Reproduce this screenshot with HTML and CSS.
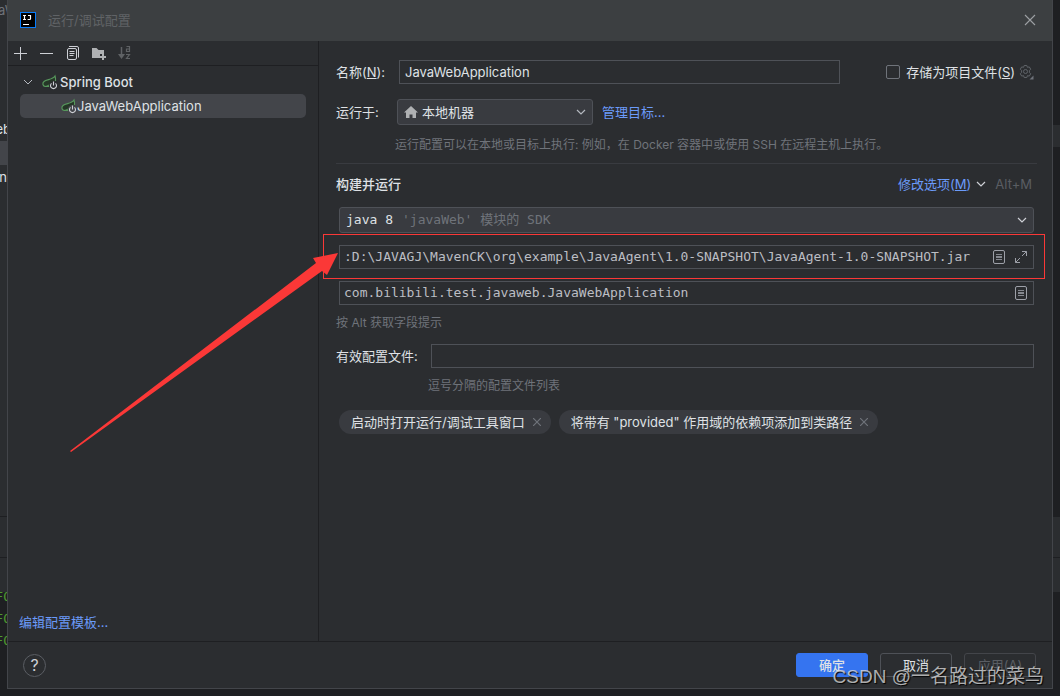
FILE: index.html
```html
<!DOCTYPE html>
<html lang="zh-CN">
<head>
<meta charset="utf-8">
<title>运行/调试配置</title>
<link rel="stylesheet" href="styles.css">
</head>
<body>
<div class="screen">
  <div class="behind behind-left" aria-hidden="true">
    <span class="scrap scrap-title">aW</span>
    <span class="scrap scrap-web">eb</span>
    <span class="scrap scrap-row"></span>
    <span class="scrap scrap-n">n</span>
    <span class="scrap scrap-log">FO<br>FO<br>FO</span>
  </div>

  <div class="dialog" role="dialog" aria-labelledby="title">
    <header class="titlebar">
      <svg class="logo" width="16" height="16" viewBox="0 0 16 16" aria-hidden="true">
        <rect x=".5" y=".5" width="15" height="15" fill="#000" stroke="#087cfa"/>
        <path d="M3 3.500h3M4.500 3.500v4M3 7.500h3M8 3.500h2.500v3.200q0 .8-.8.8H7.600M3 12.500h6" fill="none" stroke="#fff" stroke-width="1.200"/>
      </svg>
      <h1 class="title" id="title">运行/调试配置</h1>
      <button class="icon-button" aria-label="关闭">
        <svg width="12" height="12" viewBox="0 0 12 12"><path d="M1 1l10 10M11 1L1 11" stroke="#9da0a3" stroke-width="1.100"/></svg>
      </button>
    </header>

    <div class="content">
      <aside class="sidebar">
        <div class="toolbar">
          <button class="icon-button" aria-label="添加"><svg width="16" height="16" viewBox="0 0 16 16"><path d="M8.500 2v13M2 8.500h13" stroke="#ced0d6" stroke-width="1"/></svg></button>
          <button class="icon-button" aria-label="移除"><svg width="16" height="16" viewBox="0 0 16 16"><path d="M2 8.500h13" stroke="#ced0d6" stroke-width="1"/></svg></button>
          <button class="icon-button" aria-label="复制"><svg width="16" height="16" viewBox="0 0 16 16" fill="none" stroke="#ced0d6"><rect x="3.500" y="3.500" width="9" height="11" rx="1.500"/><path d="M5 1.500h8a1.500 1.500 0 0 1 1.500 1.500v9.500M5.500 6.500h5M5.500 8.500h5M5.500 10.500h4"/></svg></button>
          <button class="icon-button" aria-label="新建文件夹"><svg width="16" height="16" viewBox="0 0 16 16" fill="#afb1b3"><path d="M2 3h4.500l2 2H14v4h-4v4H2z"/><path d="M12 9h2v2h2v2h-2v2h-2v-2h-2v-2h2z"/></svg></button>
          <button class="icon-button" aria-label="排序" disabled><svg width="16" height="16" viewBox="0 0 16 16" fill="none" stroke="#5f6265"><path d="M5.500 2v10" stroke-width="1.500"/><path d="M2 9h7l-3.500 5z" fill="#5f6265" stroke="none"/><path d="M10.500 1.500h3v5h-3v-2.500h3M10 9.500h3.500l-3 4H14" stroke-width="1.200"/></svg></button>
        </div>
        <ul class="tree">
          <li class="node group">
            <svg width="16" height="16" viewBox="0 0 16 16"><path d="M4 6l4 4 4-4" fill="none" stroke="#b4b8bf"/></svg>
            <svg width="16" height="16" viewBox="0 0 16 16"><path d="M13.500 2c.5 3.500.3 6.500-1.500 8.500-1.500 2-4 2.500-6.500 2.500H3C.5 12.500.3 9 2 7.500 4.500 5 10.500 6 13.500 2z" fill="#253627"/><path d="M7.500 12.500H3C.5 12 .3 9 2 7.500 4.500 5 10.500 6 13 2q.8 2.500.5 5M2 12.500c3-.2 6-1.500 8-4" fill="none" stroke="#57965c" stroke-width="1.200"/><circle cx="11.500" cy="11.500" r="4.500" fill="#2b2d30"/><path d="M9.500 9.400a3 3 0 1 0 4 0M11.500 7.500v4" fill="none" stroke="#ced0d6" stroke-width="1.100"/></svg>
            <span>Spring Boot</span>
          </li>
          <li class="node leaf">
            <svg width="16" height="16" viewBox="0 0 16 16"><path d="M13.500 2c.5 3.500.3 6.500-1.500 8.500-1.500 2-4 2.500-6.500 2.500H3C.5 12.500.3 9 2 7.500 4.500 5 10.500 6 13.500 2z" fill="#253627"/><path d="M7.500 12.500H3C.5 12 .3 9 2 7.500 4.500 5 10.500 6 13 2q.8 2.500.5 5M2 12.500c3-.2 6-1.500 8-4" fill="none" stroke="#57965c" stroke-width="1.200"/><circle cx="11.500" cy="11.500" r="4.500" fill="#43454a"/><path d="M9.500 9.400a3 3 0 1 0 4 0M11.500 7.500v4" fill="none" stroke="#ced0d6" stroke-width="1.100"/></svg>
            <span>JavaWebApplication</span>
          </li>
        </ul>
        <a class="link templates" href="#">编辑配置模板...</a>
      </aside>

      <main class="form">
        <div class="row name-row">
          <label class="label" for="name">名称(<u>N</u>):</label>
          <input class="field name" id="name" type="text" value="JavaWebApplication">
          <div class="store">
            <input class="check" id="store" type="checkbox">
            <label for="store">存储为项目文件(<u>S</u>)</label>
            <svg width="16" height="16" viewBox="0 0 16 16" fill="none" stroke="#5f6368"><path d="M6.200 1.500h2.600l.6 1.800 1.900-.4 1.400 2.300-1.300 1.400v1.800l1.300 1.400-1.400 2.300-1.900-.4-.6 1.800H6.200l-.6-1.800-1.900.4-1.400-2.300 1.300-1.400V6.600L2.300 5.200l1.400-2.300 1.900.4z"/><circle cx="7.500" cy="7.500" r="2"/><path d="M15.500 11.500v4h-4z" fill="#6f737a" stroke="none"/></svg>
          </div>
        </div>

        <div class="row target-row">
          <label class="label" for="target">运行于:</label>
          <div class="select-box target">
            <select class="select" id="target"><option>本地机器</option></select>
            <svg class="home" width="16" height="16" viewBox="0 0 16 16" fill="#afb1b3"><path d="M8 2l7 6.500h-2V14H9.500v-3.500h-3V14H3V8.500H1z"/></svg>
            <svg class="chevron" width="16" height="16" viewBox="0 0 16 16"><path d="M4 6l4 4 4-4" fill="none" stroke="#b4b8bf" stroke-width="1.200"/></svg>
          </div>
          <a class="link" href="#">管理目标...</a>
        </div>
        <p class="hint target-hint">运行配置可以在本地或目标上执行: 例如，在 Docker 容器中或使用 SSH 在远程主机上执行。</p>

        <section class="build">
          <div class="row build-head">
            <h2 class="heading">构建并运行</h2>
            <a class="link" href="#">修改选项(<u>M</u>)</a>
            <svg width="16" height="16" viewBox="0 0 16 16"><path d="M4 6l4 4 4-4" fill="none" stroke="#ced0d6" stroke-width="1.200"/></svg>
            <span class="shortcut">Alt+M</span>
          </div>

          <div class="stack">
            <div class="select-box">
              <select class="select mono" aria-label="JDK"><option>java 8</option></select>
              <span class="sdk-note mono">'javaWeb' 模块的 SDK</span>
              <svg class="chevron" width="16" height="16" viewBox="0 0 16 16"><path d="M4 6l4 4 4-4" fill="none" stroke="#ced0d6" stroke-width="1.200"/></svg>
            </div>

            <div class="field vm">
              <input class="bare mono" type="text" aria-label="虚拟机选项" value=":D:\JAVAGJ\MavenCK\org\example\JavaAgent\1.0-SNAPSHOT\JavaAgent-1.0-SNAPSHOT.jar">
              <button class="icon-button" aria-label="插入宏"><svg width="16" height="16" viewBox="0 0 16 16" fill="none" stroke="#9da0a8"><rect x="2.500" y="1.500" width="11" height="13" rx="1.500"/><path d="M5 5.500h6M5 7.500h6M5 8.500h6M5 10.500h6" stroke-width=".8"/></svg></button>
              <button class="icon-button" aria-label="展开"><svg width="16" height="16" viewBox="0 0 16 16" fill="none" stroke="#9da0a8"><path d="M9 2.500h4.500V7M13.500 2.500L9 7M2.500 9v4.500H7M2.500 13.500L7 9"/></svg></button>
              <div class="mark" aria-hidden="true"></div>
              <svg class="arrow" width="270" height="202" viewBox="0 0 270 202" aria-hidden="true"><path d="M1 200L247 12l-3-5 25-5-11 22-5-4L2 201z" fill="#fb3837"/></svg>
            </div>

            <div class="field">
              <input class="bare mono" type="text" aria-label="主类" value="com.bilibili.test.javaweb.JavaWebApplication">
              <button class="icon-button" aria-label="浏览"><svg width="16" height="16" viewBox="0 0 16 16" fill="none" stroke="#9da0a8"><rect x="2.500" y="1.500" width="11" height="13" rx="1.500"/><path d="M5 5.500h6M5 7.500h6M5 8.500h6M5 10.500h6" stroke-width=".8"/></svg></button>
            </div>
          </div>
          <p class="hint alt-hint">按 Alt 获取字段提示</p>

          <div class="row profiles-row">
            <label class="label" for="profiles">有效配置文件:</label>
            <input class="field profiles" id="profiles" type="text">
          </div>
          <p class="hint profiles-hint">逗号分隔的配置文件列表</p>

          <div class="chips">
            <span class="chip">启动时打开运行/调试工具窗口
              <button class="icon-button" aria-label="移除"><svg width="8" height="8" viewBox="0 0 8 8"><path d="M0 0l8 8M8 0L0 8" stroke="#6f737a" stroke-width="1.200"/></svg></button>
            </span>
            <span class="chip">将带有 "provided" 作用域的依赖项添加到类路径
              <button class="icon-button" aria-label="移除"><svg width="8" height="8" viewBox="0 0 8 8"><path d="M0 0l8 8M8 0L0 8" stroke="#6f737a" stroke-width="1.200"/></svg></button>
            </span>
          </div>
        </section>
      </main>
    </div>

    <footer class="footer">
      <button class="help" aria-label="帮助">?</button>
      <button class="button primary">确定</button>
      <button class="button">取消</button>
      <button class="button" disabled>应用(<u>A</u>)</button>
    </footer>
  </div>

  <div class="behind behind-right" aria-hidden="true"></div>
  <div class="watermark">CSDN @一名路过的菜鸟</div>
</div>
</body>
</html>
```
FILE: styles.css
```css
* {
  box-sizing: border-box;
}

body {
  margin: 0;
  background: #1e1f22;
  color: #dfe1e5;
  font: 13px/20px Inter, "Noto Sans CJK SC", sans-serif;
}

h1, h2, p, ul {
  margin: 0;
  padding: 0;
}

button, input, select {
  margin: 0;
  padding: 0;
  border: 0;
  background: none;
  color: inherit;
  font: inherit;
}

svg {
  display: block;
  flex: none;
}

.screen {
  position: relative;
  display: grid;
  grid-template-columns: 7px 1fr 7px;
  min-height: 100vh;
  padding-bottom: 7px;
}

/* Editor window showing past the dialog's edges */
.behind {
  position: relative;
  overflow: hidden;
}

.behind-left {
  background: linear-gradient(#2b2d30 516px, #1e1f22 516px 517px, #2b2d30 517px 557px, #1e1f22 557px 558px, #2b2d30 558px 592px, #1e1f22 592px);
}

.behind-right {
  background: linear-gradient(#1e1f22 125px, #2b2d30 125px 147px, #1e1f22 147px 517px, #2b2d30 517px 557px, #1e1f22 557px 558px, #2b2d30 558px 592px, #1e1f22 592px);
}

.scrap {
  position: absolute;
  right: 0;
}

.scrap-title {
  top: 0;
  right: auto;
  left: -2px;
  color: #6f737a;
}

.scrap-web {
  top: 119px;
  right: -4px;
}

.scrap-row {
  top: 141px;
  width: 7px;
  height: 24px;
  background: #43454a;
}

.scrap-n {
  top: 167px;
}

.scrap-log {
  top: 586px;
  right: -4px;
  color: #4e9a2f;
  font: 13px/22px "DejaVu Sans Mono", monospace;
}

.dialog {
  display: flex;
  flex-direction: column;
  min-width: 0;
  border: 1px solid #43454a;
  border-top: 0;
  background: #2b2d30;
}

.titlebar {
  display: flex;
  align-items: center;
  height: 41px;
  padding: 0 16px 1px 12px;
  background: #3c3f41;
}

.title {
  flex: 1;
  margin-left: 12px;
  color: #606366;
  font-size: 13px;
  font-weight: 400;
}

.icon-button {
  display: grid;
  place-items: center;
}

.content {
  display: flex;
  flex: 1;
}

.sidebar {
  display: flex;
  flex-direction: column;
  width: 311px;
  border-right: 1px solid #1e1f22;
}

.toolbar {
  display: flex;
  gap: 10px;
  height: 25px;
  padding: 0 4px;
  border-bottom: 1px solid #1e1f22;
}

.tree {
  flex: 1;
  padding: 4px 12px;
  list-style: none;
}

.node {
  display: flex;
  align-items: center;
  height: 24px;
  border-radius: 5px;
}

.group {
  gap: 6px;
  font-weight: 500;
}

.group span {
  margin-left: -4px;
}

.leaf {
  padding-left: 41px;
  background: #43454a;
}

.link {
  color: #6b9bfa;
  text-decoration: none;
}

.templates {
  padding: 0 11px 9px;
}

.form {
  flex: 1;
  min-width: 0;
  padding: 19px 15px 19px 17px;
}

.row {
  display: flex;
  align-items: center;
  padding-right: 3px;
}

.label {
  flex: none;
  width: 61px;
}

.field {
  display: flex;
  align-items: center;
  height: 24px;
  border: 1px solid #4e5157;
}

.name {
  flex: 1;
  min-width: 0;
  margin: 0 46px 0 2px;
  padding: 0 5px;
}

.store {
  display: flex;
  align-items: center;
  gap: 6px;
}

.store svg {
  margin-left: -3px;
}

.check {
  width: 14px;
  height: 14px;
  border: 1px solid #6f737a;
  border-radius: 2px;
  appearance: none;
}

.target-row {
  margin-top: 15px;
}

.select-box {
  position: relative;
  display: flex;
  align-items: center;
  height: 26px;
}

.select {
  width: 100%;
  height: 26px;
  padding: 0 28px 0 6px;
  border: 1px solid #4e5157;
  border-radius: 3px;
  background: #393b40;
  appearance: none;
}

.target {
  width: 196px;
  margin-right: 9px;
}

.target .select {
  padding-left: 24px;
}

.home {
  position: absolute;
  left: 6px;
}

.chevron {
  position: absolute;
  right: 4px;
}

.hint {
  color: #6f737a;
  font-size: 12px;
  line-height: 16px;
}

.target-hint {
  margin: 12px 0 10px 59px;
}

.build {
  border-top: 1px solid #393b40;
}

.build-head {
  margin: 10px 0 13px;
  padding-right: 5px;
}

.heading {
  flex: 1;
  font-size: 13px;
  font-weight: 500;
}

.build-head svg {
  margin: 0 6px 0 2px;
}

.shortcut {
  color: #5a5d63;
}

.stack {
  display: flex;
  flex-direction: column;
  gap: 12px;
  padding: 0 3px;
}

.mono {
  font-family: "DejaVu Sans Mono", "Noto Sans CJK SC", monospace;
}

.sdk-note {
  position: absolute;
  left: 63px;
  color: #6f737a;
  pointer-events: none;
}

.stack .field {
  gap: 6px;
  padding: 0 4px;
  color: #bcbec4;
}

.vm {
  position: relative;
}

.bare {
  flex: 1;
  min-width: 0;
}

.mark {
  position: absolute;
  inset: -12px -12px -11px -17px;
  border: 1px solid #fb3837;
  pointer-events: none;
}

.arrow {
  position: absolute;
  top: 5px;
  left: -271px;
  pointer-events: none;
}

.alt-hint {
  margin: 10px 0 13px;
}

.profiles-row .label {
  width: 95px;
}

.profiles {
  flex: 1;
  min-width: 0;
  padding: 0 6px;
}

.profiles-hint {
  margin: 10px 0 16px 92px;
}

.chips {
  display: flex;
  flex-wrap: wrap;
  gap: 8px;
  padding-left: 3px;
}

.chip {
  display: flex;
  align-items: center;
  gap: 8px;
  height: 24px;
  padding: 0 10px 0 12px;
  border-radius: 12px;
  background: #393b40;
}

.footer {
  display: flex;
  align-items: center;
  gap: 12px;
  height: 47px;
  padding: 0 16px 0 15px;
  border-top: 1px solid #1e1f22;
}

.help {
  width: 23px;
  height: 23px;
  margin-right: auto;
  border: 1px solid #5a5d63;
  border-radius: 50%;
  color: #ced0d6;
  font-size: 16px;
  line-height: 20px;
}

.button {
  width: 72px;
  height: 24px;
  border: 1px solid #4e5157;
  border-radius: 3px;
}

.button:disabled {
  border-color: #43454a;
  color: #5a5d63;
}

.primary {
  border-color: #3574f0;
  background: #3574f0;
  font-weight: 500;
}

.watermark {
  position: absolute;
  right: 16px;
  bottom: 5px;
  color: rgba(225, 225, 225, .75);
  font: 19px/28px "Liberation Sans", "Noto Sans CJK SC", sans-serif;
  text-shadow: 1px 1px 1px #000;
  pointer-events: none;
}
```
